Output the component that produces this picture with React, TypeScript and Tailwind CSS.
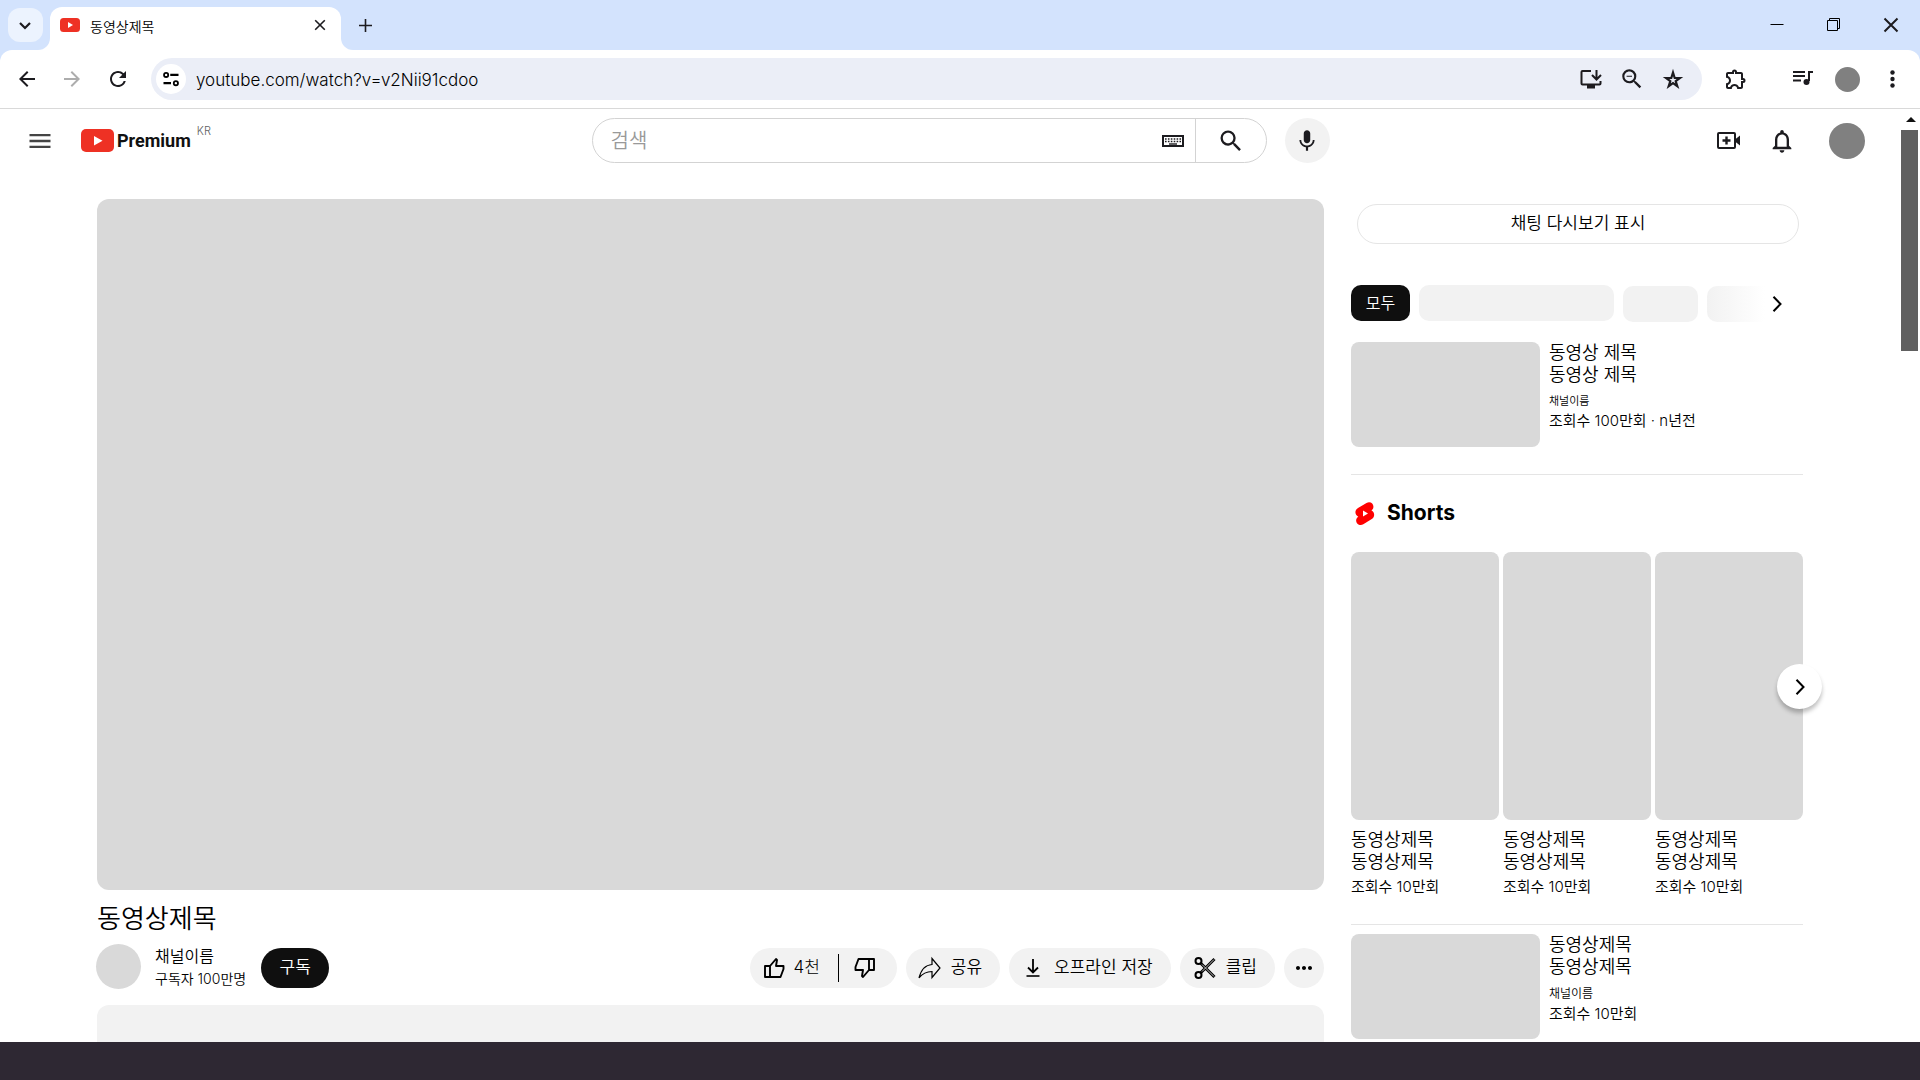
import React, { ReactNode } from "react";
import {
  MdArrowBack, MdRefresh, MdSearch, MdMic, MdOutlineNotifications, MdMenu,
  MdMoreHoriz, MdZoomOut, MdOutlineExtension,
} from "react-icons/md";

const ink = "text-[#1c1b1f]";

function Icon({ children, className = "size-6", vb = "0 0 24 24" }: { children: ReactNode; className?: string; vb?: string }) {
  return (
    <svg viewBox={vb} className={`shrink-0 ${className}`} fill="none" stroke="currentColor" strokeWidth="2" aria-hidden="true">
      {children}
    </svg>
  );
}

function TabStrip() {
  return (
    <header className="flex h-[50px] items-end bg-[#d3e3fd]">
      <div className="flex h-[50px] shrink-0 bg-white">
        <div className="flex w-[50px] items-center justify-center rounded-br-[12px] bg-[#d3e3fd]">
          <button aria-label="탭 검색" className="flex h-[34px] w-[35px] items-center justify-center rounded-xl bg-[#ecf3fe]">
            <Icon className="size-6"><path d="M7 10l5 5 5-5" strokeWidth="2.2" /></Icon>
          </button>
        </div>
      </div>
      <div className="flex h-[50px] w-[291px] flex-col bg-[#d3e3fd] pt-[7px]">
        <div className="flex flex-1 items-center rounded-t-[12px] bg-white pb-[7px] pl-[10px] pr-[9px]">
          <svg viewBox="0 0 20 14" className="h-[14px] w-5 shrink-0" aria-hidden="true">
            <rect width="20" height="14" rx="3.5" fill="#ee3124" />
            <path d="M8 4l5 3-5 3z" fill="#fff" />
          </svg>
          <span className="ml-[10px] flex-1 pt-1 text-sm leading-5 font-[350] text-black">동영상제목</span>
          <button aria-label="탭 닫기"><Icon><path d="M7.2 7.2l9.6 9.6M16.8 7.2l-9.6 9.6" strokeWidth="1.6" /></Icon></button>
        </div>
      </div>
      <div className="h-[50px] flex-1 bg-white">
        <div className="flex h-[50px] items-center rounded-bl-[12px] bg-[#d3e3fd]">
          <button aria-label="새 탭" className="ml-3"><Icon><path d="M12.5 6v13M6 12.5h13" strokeWidth="1.6" /></Icon></button>
          <div className="ml-auto flex items-center gap-[33px] pr-[17px]">
            <button aria-label="최소화"><Icon><path d="M5.500 11.500h13" stroke="#000" strokeWidth="1" /></Icon></button>
            <button aria-label="이전 크기로"><Icon><path d="M5.500 7.500h10v10h-10zM7.500 7.500v-2h10v10h-2" stroke="#000" strokeWidth="1" /></Icon></button>
            <button aria-label="닫기"><Icon><path d="M5.500 5.500l13 13M18.500 5.500l-13 13" /></Icon></button>
          </div>
        </div>
      </div>
    </header>
  );
}

function Toolbar() {
  return (
    <div className="bg-[#d3e3fd]">
      <div className="flex h-[59px] items-center rounded-t-[12px] border-b border-[#d9d9d9] bg-white">
        <button aria-label="뒤로" className="ml-[15px]"><MdArrowBack className="size-6" /></button>
        <button aria-label="앞으로" className="ml-[21px] text-[#adadad]"><MdArrowBack className="size-6 rotate-180" /></button>
        <button aria-label="새로고침" className="ml-[22px]"><MdRefresh className="size-6" /></button>
        <div className="ml-[21px] flex h-[42px] flex-1 items-center rounded-full bg-[#ebeef7] pl-[5px] pr-[17px]">
          <button aria-label="사이트 정보" className="flex size-[30px] items-center justify-center rounded-full bg-white text-black">
            <Icon className="size-[18px]">
              <circle cx="5.500" cy="6.500" r="2.800" strokeWidth="2.400" /><path d="M11 6.500h11M2 17.500h10" strokeWidth="2.800" /><circle cx="18.500" cy="17.500" r="2.800" strokeWidth="2.400" />
            </Icon>
          </button>
          <input aria-label="주소창" defaultValue="youtube.com/watch?v=v2Nii91cdoo" className="ml-[10px] min-w-0 flex-1 bg-transparent pt-1 text-[17px] font-light text-black outline-none" />
          <div className="flex items-center gap-4">
            <button aria-label="설치"><Icon><path d="M12 4H3.500a1 1 0 0 0-1 1v11.500a1 1 0 0 0 1 1h17a1 1 0 0 0 1-1V14M17.500 3v9M13 8l4.500 4.500L22 8" /><path d="M8 18h8v3.500H8z" fill="currentColor" stroke="none" /></Icon></button>
            <button aria-label="축소"><MdZoomOut className="size-[26px]" /></button>
            <button aria-label="북마크"><Icon><path d="M12 5.500l1.700 5.500h5.200l-4.200 3.100 1.600 5.100-4.300-3.100-4.300 3.100 1.600-5.100L5.100 11h5.200z" strokeWidth="2.200" /></Icon></button>
          </div>
        </div>
        <button aria-label="확장 프로그램" className="ml-[22px]"><MdOutlineExtension className="size-6" /></button>
        <button aria-label="미디어" className="ml-[43px]">
          <Icon><path d="M2 5h12M2 9h12M2 13.500h8" /><path d="M22 5h-4v9" /><circle cx="15.500" cy="15" r="3" fill="currentColor" stroke="none" /></Icon>
        </button>
        <button aria-label="프로필" className="ml-5 size-[25px] rounded-full bg-[#808080]" />
        <button aria-label="메뉴" className="ml-5 mr-4">
          <Icon><g fill="currentColor" stroke="none"><circle cx="12.500" cy="5.500" r="2.200" /><circle cx="12.500" cy="12" r="2.200" /><circle cx="12.500" cy="18.500" r="2.200" /></g></Icon>
        </button>
      </div>
    </div>
  );
}

function Masthead() {
  return (
    <div className="flex h-[63px] items-center pl-[26px] pr-9">
      <div className="flex flex-1 items-center">
        <button aria-label="메뉴" className="text-[#444]"><MdMenu className="size-7" /></button>
        <a href="#" aria-label="YouTube Premium" className="ml-[27px] flex items-center">
          <svg viewBox="0 0 33 23" className="h-[23px] w-[33px]" aria-hidden="true">
            <rect width="33" height="23" rx="5" fill="#ee3124" />
            <path d="M13 7l8.500 4.700L13 16.500z" fill="#fff" />
          </svg>
          <span className="ml-[3px] font-['Roboto',sans-serif] text-lg leading-6 font-bold text-[#111]">Premium</span>
        </a>
        <span className="mb-5 ml-[6px] text-[11px] leading-4 font-light text-[#606060]">KR</span>
      </div>
      <form className="ml-[30px] flex h-[45px] w-[675px] items-center rounded-full border border-[#d3d3d3]">
        <input aria-label="검색" placeholder="검색" className="min-w-0 flex-1 bg-transparent pl-[18px] text-xl font-[350] placeholder:text-[#999] outline-none" />
        <button type="button" aria-label="키보드" className="mr-[11px]">
          <Icon className="h-3 w-[22px]" vb="0 0 22 12">
            <rect x="1" y="1" width="20" height="10" />
            <path d="M3 4h16M3 6.500h16" strokeWidth="1.600" strokeDasharray="1.600 1.300" />
            <path d="M7 9h8" strokeWidth="1.400" />
          </Icon>
        </button>
        <button type="button" aria-label="검색 실행" className="flex h-full w-[71px] items-center justify-center border-l border-[#d3d3d3]"><MdSearch className="size-7" /></button>
      </form>
      <button aria-label="음성 검색" className="ml-[18px] flex size-[45px] items-center justify-center rounded-full bg-[#f2f2f2]"><MdMic className="size-[26px]" /></button>
      <div className="flex flex-1 items-center justify-end">
        <button aria-label="만들기">
          <Icon className="size-[28px]" vb="0 0 28 28"><rect x="5" y="6" width="17" height="15" rx="1" /><path d="M9.500 13.500h8M13.500 9.500v8" strokeWidth="2.400" /><path d="M22 12.500l5-4v10l-5-4z" fill="currentColor" stroke="none" /></Icon>
        </button>
        <button aria-label="알림" className="ml-[27px]"><MdOutlineNotifications className="size-7" /></button>
        <button aria-label="계정" className="ml-[33px] size-9 rounded-full bg-[#808080]" />
      </div>
    </div>
  );
}

const pill = "flex h-10 items-center rounded-full bg-[#f2f2f2]";

function Thumb({ className = "" }: { className?: string }) {
  return (
    <Icon className={`size-6 ${className}`}>
      <path d="M3 10h5v11H3zM8 10l6-7 1 1-1 6h7.500v3L18.500 21H8" strokeLinejoin="round" strokeWidth="1.900" />
    </Icon>
  );
}

function WatchColumn() {
  return (
    <main className="min-w-0 flex-1">
      <div className="aspect-[1227/691] w-full rounded-xl bg-[#d9d9d9]" />
      <h1 className="mt-[13px] text-[26px] leading-8 font-[350]">동영상제목</h1>
      <div className="mt-2 flex items-center">
        <div className="mb-px -ml-px size-[45px] rounded-full bg-[#d9d9d9]" />
        <div className="ml-[14px] pt-px">
          <p className="text-base leading-6 font-[350]">채널이름</p>
          <p className="text-sm leading-[22px] font-[350]">구독자 100만명</p>
        </div>
        <button className="mt-0.5 ml-[15px] flex h-10 w-[68px] items-center justify-center rounded-full bg-[#0f0f0f] text-[17px] font-[350] text-white">구독</button>
        <div className="mt-0.5 ml-auto flex gap-[9px] text-[17px] font-[350]">
          <div className={pill}>
            <button className="flex items-center pl-3 pr-[18px]"><Thumb /><span className="ml-[7px] font-light">4천</span></button>
            <span className="h-7 w-px bg-black" />
            <button aria-label="싫어요" className="pl-[14px] pr-5"><Thumb className="rotate-180" /></button>
          </div>
          <button className={`${pill} pl-3 pr-[18px]`}>
            <Icon className="size-6"><path d="M14 8.500V2.500l8 9.500-8 9.500V15.500C8.500 15.500 4.500 17.500 1 22 3 14 7 9 14 8.500z" strokeWidth="1.200" /></Icon>
            <span className="ml-[9px]">공유</span>
          </button>
          <button className={`${pill} pl-3 pr-[18px]`}>
            <Icon className="size-6"><path d="M12 3v13M7 11.500l5 5 5-5" strokeWidth="1.800" /><path d="M5.500 20h13" strokeWidth="1.600" /></Icon>
            <span className="ml-[9px]">오프라인 저장</span>
          </button>
          <button className={`${pill} pl-[13px] pr-[18px]`}>
            <Icon className="size-6">
              <circle cx="5.500" cy="5" r="3" /><circle cx="5.500" cy="19" r="3" />
              <path d="M7.500 7L21.500 21M7.500 17L21.500 3" strokeWidth="3" /><path d="M9 8.500L21 20.500M9 15.500L21 3.500" stroke="#d8d8d8" strokeWidth="0.900" />
            </Icon>
            <span className="ml-[9px]">클립</span>
          </button>
          <button aria-label="더보기" className={`${pill} w-10 justify-center`}><MdMoreHoriz className="size-6" /></button>
        </div>
      </div>
      <div className="mt-[15px] h-[60px] rounded-t-xl bg-[#f2f2f2]" />
    </main>
  );
}

function VideoRow({ title, meta, channelClass }: { title: string; meta: string; channelClass: string }) {
  return (
    <a href="#" className="flex gap-[9px]">
      <div className="h-[105px] w-[189px] shrink-0 rounded-lg bg-[#d9d9d9]" />
      <div className="font-[350]">
        <p className="text-lg leading-[22px]">{title}<br />{title}</p>
        <p className={`leading-4 ${channelClass}`}>채널이름</p>
        <p className="mt-[2px] text-[15px] leading-5">{meta}</p>
      </div>
    </a>
  );
}

function Chevron() {
  return <Icon><path d="M8.500 4.800l7 7.200-7 7.200" strokeWidth="2" /></Icon>;
}

function Sidebar() {
  return (
    <aside className="w-[452px] shrink-0">
      <button className="ml-[6px] mt-[5px] flex h-10 w-[442px] items-center justify-center rounded-full border border-[#e5e5e5] text-[17px] font-[350]">채팅 다시보기 표시</button>
      <div className="mt-[41px] flex items-start">
        <button className="h-9 w-[59px] rounded-[10px] bg-[#0f0f0f] text-base font-[350] text-white">모두</button>
        <div className="ml-[9px] h-9 w-[195px] rounded-[10px] bg-[#f2f2f2]" />
        <div className="ml-[9px] mt-px h-9 w-[75px] rounded-[10px] bg-[#f2f2f2]" />
        <div className="ml-[9px] mt-px h-9 w-[58px] rounded-l-[10px] bg-linear-to-r from-[#f2f2f2] to-white" />
        <button aria-label="다음 필터" className="mt-[7px]"><Chevron /></button>
      </div>
      <div className="mt-5"><VideoRow title="동영상 제목" meta="조회수 100만회 · n년전" channelClass="mt-[7px] text-[11px]" /></div>
      <hr className="mt-[27px] border-[#e5e5e5]" />
      <div className="mt-6 flex items-center">
        <svg viewBox="0 0 28 28" className="size-7" aria-hidden="true">
          <path d="M7 9l8.500-5c5.500-2.800 9.500 4 5 7.500 3.500 1.500 3.500 6.500.3 8.500l-8.500 5.300c-5.500 2.800-10-4.300-5-7.600C3.500 16 3.500 11 7 9z" fill="#f00" />
          <path d="M12 11.500l5 3-5 3z" fill="#fff" />
        </svg>
        <h2 className="ml-2 text-[21px] leading-7 font-bold">Shorts</h2>
      </div>
      <div className="relative mt-[25px] grid grid-cols-3 gap-1">
        {[0, 1, 2].map((i) => (
          <a href="#" key={i} className="font-[350]">
            <div className="h-[268px] rounded-lg bg-[#d9d9d9]" />
            <p className="mt-[9px] text-lg leading-[22px]">동영상제목<br />동영상제목</p>
            <p className="mt-1 text-[15px] leading-5">조회수 10만회</p>
          </a>
        ))}
        <button aria-label="다음 Shorts" className="absolute -right-[19px] top-[112px] flex size-[45px] items-center justify-center rounded-full bg-white shadow-[0_4px_4px_rgba(0,0,0,0.25)]"><Chevron /></button>
      </div>
      <hr className="mt-[27px] mb-[9px] border-[#e5e5e5]" />
      <VideoRow title="동영상제목" meta="조회수 10만회" channelClass="mt-2 text-xs" />
    </aside>
  );
}

export default function App() {
  return (
    <div className="flex h-screen flex-col overflow-hidden bg-white font-['Inter','Noto_Sans_CJK_KR',sans-serif] text-black">
      <div className={ink}><TabStrip /><Toolbar /></div>
      <div className="flex min-h-0 flex-1 overflow-hidden">
        <div className="min-w-0 flex-1">
          <div className={ink}><Masthead /></div>
          <div className="mt-[27px] flex gap-[27px] pl-[97px] pr-[98px]">
            <WatchColumn />
            <Sidebar />
          </div>
        </div>
        <div className="flex w-[19px] flex-col">
          <div className="flex h-[21px] items-center justify-center">
            <svg viewBox="0 0 10 5" className="h-[5px] w-[10px]" aria-hidden="true"><path d="M0 5l5-5 5 5z" fill="#111" /></svg>
          </div>
          <div className="mr-[2px] h-[221px] bg-[#606060]" />
        </div>
      </div>
      <footer className="h-[38px] shrink-0 bg-[#2e2833]" />
    </div>
  );
}
